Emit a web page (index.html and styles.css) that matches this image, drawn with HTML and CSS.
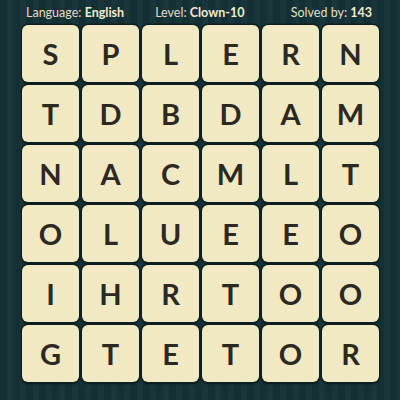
FILE: index.html
```html
<!DOCTYPE html>
<html>
<head>
<meta charset="utf-8">
<link rel="stylesheet" href="styles.css">
</head>
<body>
<div class="page">
  <div class="header">
    <span class="item lang">Language: <b>English</b></span>
    <span class="item level">Level: <b>Clown-10</b></span>
    <span class="item solved">Solved by: <b>143</b></span>
  </div>
  <div class="grid">
    <div class="tile">S</div><div class="tile">P</div><div class="tile">L</div><div class="tile">E</div><div class="tile">R</div><div class="tile">N</div>
    <div class="tile">T</div><div class="tile">D</div><div class="tile">B</div><div class="tile">D</div><div class="tile">A</div><div class="tile">M</div>
    <div class="tile">N</div><div class="tile">A</div><div class="tile">C</div><div class="tile">M</div><div class="tile">L</div><div class="tile">T</div>
    <div class="tile">O</div><div class="tile">L</div><div class="tile">U</div><div class="tile">E</div><div class="tile">E</div><div class="tile">O</div>
    <div class="tile">I</div><div class="tile">H</div><div class="tile">R</div><div class="tile">T</div><div class="tile">O</div><div class="tile">O</div>
    <div class="tile">G</div><div class="tile">T</div><div class="tile">E</div><div class="tile">T</div><div class="tile">O</div><div class="tile">R</div>
  </div>
</div>
</body>
</html>
```
FILE: styles.css
```css
html, body {
  margin: 0;
  padding: 0;
}
body {
  width: 400px;
  height: 400px;
  overflow: hidden;
  background-color: #163337;
  background-image: repeating-linear-gradient(90deg, rgba(0,0,0,0.06) 0px, rgba(0,0,0,0.06) 7px, rgba(255,255,255,0.015) 7px, rgba(255,255,255,0.015) 13px);
  font-family: Lato, "Open Sans", sans-serif;
}
.page {
  width: 400px;
  height: 400px;
}
.header {
  height: 25px;
  display: flex;
  align-items: center;
  padding: 0 28px 1px 26px;
  box-sizing: border-box;
  color: #e2dec3;
  font-size: 12.5px;
}
.header b {
  font-weight: 700;
  color: #f0ecd2;
}
.level {
  margin-left: 31px;
}
.solved {
  margin-left: auto;
}
.grid {
  display: grid;
  grid-template-columns: repeat(6, 57px);
  grid-auto-rows: 57px;
  gap: 3px;
  padding-left: 22px;
}
.tile {
  background: #f1e9c3;
  border-radius: 6px;
  box-shadow: 0 0 0 1.5px #0e1f21, 0 2px 2px rgba(0,0,0,0.5);
  display: flex;
  align-items: center;
  justify-content: center;
  color: #2c2822;
  font-size: 29px;
  font-weight: 700;
  font-family: Lato, "Open Sans", sans-serif;
}
```
